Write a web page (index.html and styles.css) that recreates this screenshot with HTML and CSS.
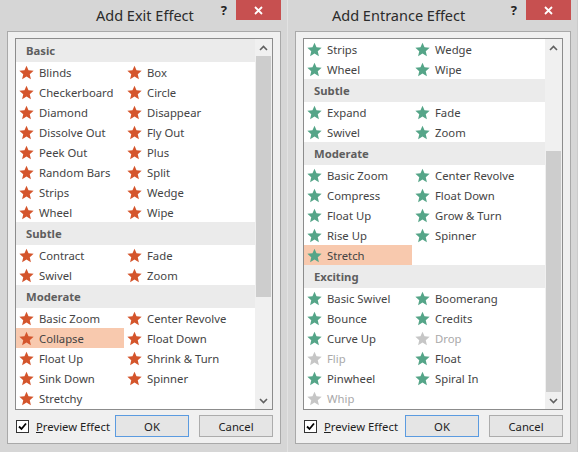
FILE: index.html
```html
<!DOCTYPE html>
<html>
<head>
    <title>Animation Effects</title>
    <link rel="stylesheet" href="styles.css">
</head>
<body>
    <svg class="sprite" xmlns="http://www.w3.org/2000/svg">
        <symbol id="star" viewBox="0 0 24 24">
            <path d="M12 1L15.23 8.55L23.41 9.29L17.23 14.7L19.05 22.71L12 18.5L4.95 22.71L6.77 14.7L.59 9.29L8.77 8.55Z"/>
        </symbol>
    </svg>
    <div class="screen">
        <div class="dialog dialog-exit">
            <div class="titlebar">
                <span class="title">Add Exit Effect</span>
                <span class="help">?</span>
                <span class="close">
                    <svg width="9" height="9" viewBox="0 0 9 9"><path d="M1 1l7 7M8 1l-7 7"/></svg>
                </span>
            </div>
            <div class="panel">
                <div class="listbox">
                    <div class="list exit">
                        <div class="group">Basic</div>
                        <div class="item"><svg><use href="#star"/></svg>Blinds</div>
                        <div class="item"><svg><use href="#star"/></svg>Box</div>
                        <div class="item"><svg><use href="#star"/></svg>Checkerboard</div>
                        <div class="item"><svg><use href="#star"/></svg>Circle</div>
                        <div class="item"><svg><use href="#star"/></svg>Diamond</div>
                        <div class="item"><svg><use href="#star"/></svg>Disappear</div>
                        <div class="item"><svg><use href="#star"/></svg>Dissolve Out</div>
                        <div class="item"><svg><use href="#star"/></svg>Fly Out</div>
                        <div class="item"><svg><use href="#star"/></svg>Peek Out</div>
                        <div class="item"><svg><use href="#star"/></svg>Plus</div>
                        <div class="item"><svg><use href="#star"/></svg>Random Bars</div>
                        <div class="item"><svg><use href="#star"/></svg>Split</div>
                        <div class="item"><svg><use href="#star"/></svg>Strips</div>
                        <div class="item"><svg><use href="#star"/></svg>Wedge</div>
                        <div class="item"><svg><use href="#star"/></svg>Wheel</div>
                        <div class="item"><svg><use href="#star"/></svg>Wipe</div>
                        <div class="group">Subtle</div>
                        <div class="item"><svg><use href="#star"/></svg>Contract</div>
                        <div class="item"><svg><use href="#star"/></svg>Fade</div>
                        <div class="item"><svg><use href="#star"/></svg>Swivel</div>
                        <div class="item"><svg><use href="#star"/></svg>Zoom</div>
                        <div class="group">Moderate</div>
                        <div class="item"><svg><use href="#star"/></svg>Basic Zoom</div>
                        <div class="item"><svg><use href="#star"/></svg>Center Revolve</div>
                        <div class="item selected"><svg><use href="#star"/></svg>Collapse</div>
                        <div class="item"><svg><use href="#star"/></svg>Float Down</div>
                        <div class="item"><svg><use href="#star"/></svg>Float Up</div>
                        <div class="item"><svg><use href="#star"/></svg>Shrink &amp; Turn</div>
                        <div class="item"><svg><use href="#star"/></svg>Sink Down</div>
                        <div class="item"><svg><use href="#star"/></svg>Spinner</div>
                        <div class="item"><svg><use href="#star"/></svg>Stretchy</div>
                    </div>
                    <div class="scrollbar scroll-top">
                        <div class="arrow">
                            <svg width="9" height="6" viewBox="0 0 9 6"><path d="M1 5l3.5-3.5L8 5"/></svg>
                        </div>
                        <div class="track"><div class="thumb"></div></div>
                        <div class="arrow">
                            <svg width="9" height="6" viewBox="0 0 9 6"><path d="M1 1l3.5 3.5L8 1"/></svg>
                        </div>
                    </div>
                </div>
                <div class="footer">
                    <label class="check">
                        <span class="box">
                            <svg width="9" height="9" viewBox="0 0 9 9"><path d="M1 4.5l2.5 2.5L8 1.5"/></svg>
                        </span>
                        <span><u>P</u>review Effect</span>
                    </label>
                    <div class="buttons">
                        <button class="btn btn-default">OK</button>
                        <button class="btn">Cancel</button>
                    </div>
                </div>
            </div>
        </div>

        <div class="dialog dialog-entrance">
            <div class="titlebar">
                <span class="title">Add Entrance Effect</span>
                <span class="help">?</span>
                <span class="close">
                    <svg width="9" height="9" viewBox="0 0 9 9"><path d="M1 1l7 7M8 1l-7 7"/></svg>
                </span>
            </div>
            <div class="panel">
                <div class="listbox">
                    <div class="list entrance">
                        <div class="item"><svg><use href="#star"/></svg>Strips</div>
                        <div class="item"><svg><use href="#star"/></svg>Wedge</div>
                        <div class="item"><svg><use href="#star"/></svg>Wheel</div>
                        <div class="item"><svg><use href="#star"/></svg>Wipe</div>
                        <div class="group">Subtle</div>
                        <div class="item"><svg><use href="#star"/></svg>Expand</div>
                        <div class="item"><svg><use href="#star"/></svg>Fade</div>
                        <div class="item"><svg><use href="#star"/></svg>Swivel</div>
                        <div class="item"><svg><use href="#star"/></svg>Zoom</div>
                        <div class="group">Moderate</div>
                        <div class="item"><svg><use href="#star"/></svg>Basic Zoom</div>
                        <div class="item"><svg><use href="#star"/></svg>Center Revolve</div>
                        <div class="item"><svg><use href="#star"/></svg>Compress</div>
                        <div class="item"><svg><use href="#star"/></svg>Float Down</div>
                        <div class="item"><svg><use href="#star"/></svg>Float Up</div>
                        <div class="item"><svg><use href="#star"/></svg>Grow &amp; Turn</div>
                        <div class="item"><svg><use href="#star"/></svg>Rise Up</div>
                        <div class="item"><svg><use href="#star"/></svg>Spinner</div>
                        <div class="item selected"><svg><use href="#star"/></svg>Stretch</div>
                        <div class="item"></div>
                        <div class="group">Exciting</div>
                        <div class="item"><svg><use href="#star"/></svg>Basic Swivel</div>
                        <div class="item"><svg><use href="#star"/></svg>Boomerang</div>
                        <div class="item"><svg><use href="#star"/></svg>Bounce</div>
                        <div class="item"><svg><use href="#star"/></svg>Credits</div>
                        <div class="item"><svg><use href="#star"/></svg>Curve Up</div>
                        <div class="item disabled"><svg><use href="#star"/></svg>Drop</div>
                        <div class="item disabled"><svg><use href="#star"/></svg>Flip</div>
                        <div class="item"><svg><use href="#star"/></svg>Float</div>
                        <div class="item"><svg><use href="#star"/></svg>Pinwheel</div>
                        <div class="item"><svg><use href="#star"/></svg>Spiral In</div>
                        <div class="item disabled"><svg><use href="#star"/></svg>Whip</div>
                    </div>
                    <div class="scrollbar scroll-bottom">
                        <div class="arrow">
                            <svg width="9" height="6" viewBox="0 0 9 6"><path d="M1 5l3.5-3.5L8 5"/></svg>
                        </div>
                        <div class="track"><div class="thumb"></div></div>
                        <div class="arrow">
                            <svg width="9" height="6" viewBox="0 0 9 6"><path d="M1 1l3.5 3.5L8 1"/></svg>
                        </div>
                    </div>
                </div>
                <div class="footer">
                    <label class="check">
                        <span class="box">
                            <svg width="9" height="9" viewBox="0 0 9 9"><path d="M1 4.5l2.5 2.5L8 1.5"/></svg>
                        </span>
                        <span><u>P</u>review Effect</span>
                    </label>
                    <div class="buttons">
                        <button class="btn btn-default">OK</button>
                        <button class="btn">Cancel</button>
                    </div>
                </div>
            </div>
        </div>
    </div>
</body>
</html>
```

FILE: styles.css
```css
* {
    box-sizing: border-box;
}
body {
    margin: 0;
    background-color: #cbcbcb;
    font-family: "Segoe UI", "Noto Sans", sans-serif;
    font-size: 11.3px;
    color: #444;
}
.sprite {
    display: none;
}
.screen {
    display: flex;
    width: 578px;
    height: 452px;
    overflow: hidden;
}
.dialog {
    display: flex;
    flex-direction: column;
    height: 452px;
    background-color: #d6d6d6;
}
.dialog-exit {
    width: 288px;
    border-right: 1px solid #adadad;
}
.dialog-entrance {
    width: 290px;
    border-left: 1px solid #e2e2e2;
    margin-left: -1px;
}

/* title bar */
.titlebar {
    display: flex;
    align-items: flex-start;
    height: 31px;
    padding-right: 6px;
}
.title {
    font-size: 14.5px;
    color: #2b2b2b;
    line-height: 30px;
    margin-right: auto;
}
.dialog-exit .title {
    margin-left: 96px;
}
.dialog-entrance .title {
    margin-left: 44px;
}
.help {
    font-weight: bold;
    font-size: 13px;
    color: #222;
    line-height: 20px;
    margin-right: 9px;
}
.close {
    display: flex;
    align-items: center;
    justify-content: center;
    width: 45px;
    height: 20px;
    background-color: #c75050;
}
.close svg {
    stroke: white;
    stroke-width: 1.8;
}

/* content panel */
.panel {
    display: flex;
    flex-direction: column;
    margin: 0 6px 0 7px;
    padding: 6px 7px 6px 7px;
    background-color: #f0f0f0;
    border: 1px solid #a9a9a9;
}
.dialog-entrance .panel {
    margin-left: 7px;
}
.listbox {
    display: flex;
    height: 372px;
    background-color: white;
    border: 1px solid #8c8c8c;
}
.list {
    flex: 1;
    display: grid;
    grid-template-columns: 108px 1fr;
    align-content: start;
    overflow: hidden;
}
.group {
    grid-column: 1 / 3;
    height: 23px;
    line-height: 23px;
    padding-left: 10px;
    background-color: #ebebeb;
    font-weight: bold;
    color: #5e5e5e;
}
.item {
    display: flex;
    align-items: center;
    height: 20px;
    padding-left: 3px;
    white-space: nowrap;
}
.item svg {
    width: 15px;
    height: 15px;
    margin-right: 5px;
    flex: none;
}
.exit .item svg {
    fill: #d4552c;
}
.entrance .item svg {
    fill: #55a588;
}
.entrance .item.disabled svg {
    fill: #c6c6c6;
}
.item.disabled {
    color: #a9a9a9;
}
.item.selected {
    background-color: #f8c9ae;
}

/* scrollbar */
.scrollbar {
    display: flex;
    flex-direction: column;
    width: 17px;
    background-color: #f0f0f0;
}
.arrow {
    display: flex;
    align-items: center;
    justify-content: center;
    height: 17px;
}
.arrow svg {
    fill: none;
    stroke: #606060;
    stroke-width: 1.6;
}
.track {
    flex: 1;
    display: flex;
    flex-direction: column;
}
.thumb {
    margin: 0 1px;
    background-color: #cdcdcd;
}
.scroll-top .thumb {
    height: 241px;
}
.scroll-bottom .track {
    justify-content: flex-end;
}
.scroll-bottom .thumb {
    height: 241px;
}

/* footer */
.footer {
    display: flex;
    align-items: center;
    margin-top: 5px;
    height: 22px;
}
.check {
    display: flex;
    align-items: center;
    color: #1e1e1e;
    margin-left: 1px;
}
.box {
    display: flex;
    align-items: center;
    justify-content: center;
    width: 13px;
    height: 13px;
    margin-right: 7px;
    background-color: white;
    border: 1px solid #333;
}
.box svg {
    fill: none;
    stroke: black;
    stroke-width: 1.8;
}
.buttons {
    display: flex;
    gap: 10px;
    margin-left: auto;
}
.btn {
    width: 74px;
    height: 22px;
    padding: 0;
    font-family: inherit;
    font-size: 11.3px;
    color: #1e1e1e;
    background-color: #e5e5e5;
    border: 1px solid #acacac;
}
.btn-default {
    border-color: #5b9be0;
}
```
